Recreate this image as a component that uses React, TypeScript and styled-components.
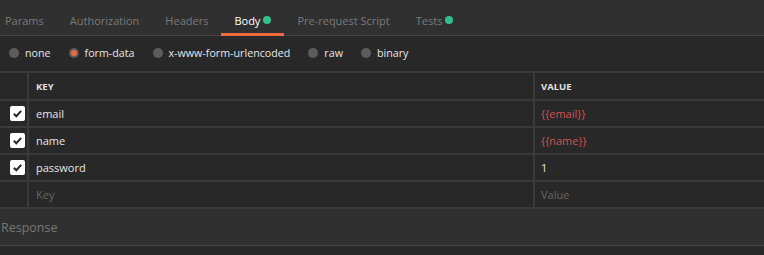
import React from "react";
import styled, { createGlobalStyle } from "styled-components";

const GlobalStyle = createGlobalStyle`
  body {
    margin: 0;
    background: #282828;
    font-family: "Open Sans", "Liberation Sans", sans-serif;
    overflow: hidden;
  }
`;

const Page = styled.div`
  width: 764px;
  height: 255px;
  background: #282828;
`;

const TabBar = styled.div`
  height: 35px;
  background: #303030;
  border-bottom: 1px solid #444;
  display: flex;
  align-items: stretch;
`;

const TabList = styled.div`
  display: flex;
  margin-left: -8px;
`;

const Tab = styled.div<{ $active?: boolean }>`
  position: relative;
  display: flex;
  align-items: center;
  gap: 3px;
  padding: 5px 13px 0;
  font-size: 11px;
  color: ${(p) => (p.$active ? "#ffffff" : "#7a7a7a")};
  &::after {
    content: "";
    position: absolute;
    left: 0;
    right: 0;
    bottom: -1px;
    height: 3px;
    background: ${(p) => (p.$active ? "#ef6a3c" : "transparent")};
  }
`;

const Dot = styled.span`
  width: 8px;
  height: 8px;
  border-radius: 50%;
  background: #2fc28c;
`;

const RadioRow = styled.div`
  height: 34px;
  display: flex;
  align-items: center;
  gap: 18px;
  padding: 0 0 1px 9px;
`;

const RadioItem = styled.label`
  display: flex;
  align-items: center;
  gap: 6px;
  font-size: 10.7px;
  color: #e6e6e6;
`;

const RadioCircle = styled.span<{ $checked?: boolean }>`
  width: 10px;
  height: 10px;
  border-radius: 50%;
  background: #5c5c5c;
  display: flex;
  align-items: center;
  justify-content: center;
  &::after {
    content: "";
    width: 6px;
    height: 6px;
    border-radius: 50%;
    background: ${(p) => (p.$checked ? "#ef6a3c" : "transparent")};
  }
`;

const Table = styled.div`
  border-top: 2px solid #3a3a3a;
`;

const Row = styled.div<{ $header?: boolean }>`
  display: grid;
  grid-template-columns: 29px 504px 1fr;
  height: ${(p) => (p.$header ? 26 : 25)}px;
  border-bottom: 2px solid #3a3a3a;
`;

const CheckCell = styled.div`
  border-right: 2px solid #3a3a3a;
  display: flex;
  align-items: center;
  padding-left: 10px;
`;

const Cell = styled.div<{ $tone?: "text" | "var" | "placeholder" }>`
  display: flex;
  align-items: center;
  padding-left: 7px;
  font-size: 11px;
  color: ${(p) =>
    p.$tone === "var" ? "#d4524f" : p.$tone === "placeholder" ? "#676767" : "#e6e6e6"};
  & + & {
    border-left: 2px solid #3a3a3a;
    padding-left: 6px;
  }
`;

const HeadCell = styled(Cell)`
  font-size: 9.5px;
  font-weight: 700;
  color: #e0e0e0;
`;

const Box = styled.span`
  width: 15px;
  height: 15px;
  border-radius: 2px;
  background: #ffffff;
  display: flex;
  align-items: center;
  justify-content: center;
`;

const Response = styled.div`
  height: 36px;
  background: #303030;
  border-bottom: 1px solid #444;
  display: flex;
  align-items: center;
  padding-left: 1px;
  font-size: 12.5px;
  color: #777;
`;

const Check = () => (
  <Box>
    <svg width="11" height="11" viewBox="0 0 11 11">
      <path d="M1.8 5.8 L4.3 8.2 L9.2 2.8" fill="none" stroke="#2a2a2a" strokeWidth="2" />
    </svg>
  </Box>
);

const tabs = [
  { label: "Params" },
  { label: "Authorization" },
  { label: "Headers" },
  { label: "Body", active: true, dot: true },
  { label: "Pre-request Script" },
  { label: "Tests", dot: true },
];

const modes = ["none", "form-data", "x-www-form-urlencoded", "raw", "binary"];

const rows = [
  { key: "email", value: "{{email}}", isVar: true },
  { key: "name", value: "{{name}}", isVar: true },
  { key: "password", value: "1", isVar: false },
];

const App = () => (
  <Page>
    <GlobalStyle />
    <TabBar>
      <TabList>
        {tabs.map((t) => (
          <Tab key={t.label} $active={t.active}>
            {t.label}
            {t.dot && <Dot />}
          </Tab>
        ))}
      </TabList>
    </TabBar>
    <RadioRow>
      {modes.map((m) => (
        <RadioItem key={m}>
          <RadioCircle $checked={m === "form-data"} />
          {m}
        </RadioItem>
      ))}
    </RadioRow>
    <Table>
      <Row $header>
        <CheckCell />
        <HeadCell>KEY</HeadCell>
        <HeadCell>VALUE</HeadCell>
      </Row>
      {rows.map((r) => (
        <Row key={r.key}>
          <CheckCell>
            <Check />
          </CheckCell>
          <Cell>{r.key}</Cell>
          <Cell $tone={r.isVar ? "var" : "text"}>{r.value}</Cell>
        </Row>
      ))}
      <Row>
        <CheckCell />
        <Cell $tone="placeholder">Key</Cell>
        <Cell $tone="placeholder">Value</Cell>
      </Row>
    </Table>
    <Response>Response</Response>
  </Page>
);

export default App;
